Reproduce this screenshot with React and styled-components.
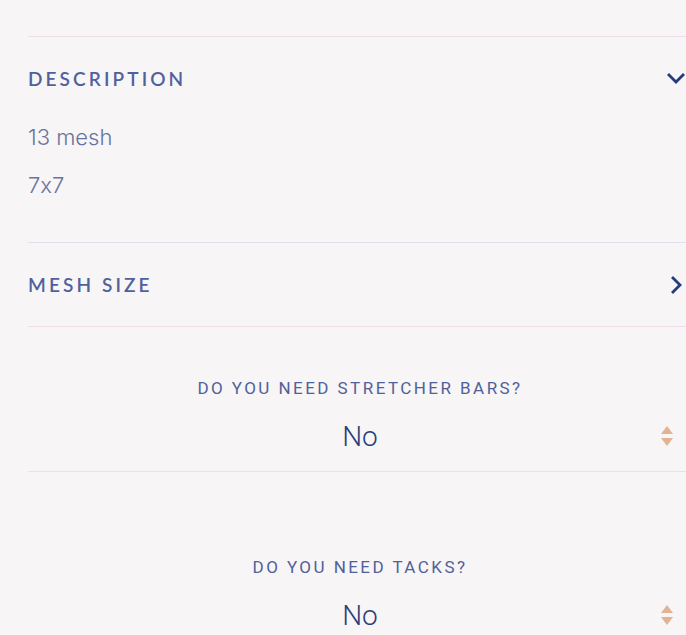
import React from "react";
import styled, { createGlobalStyle } from "styled-components";

const GlobalStyle = createGlobalStyle`
  html, body {
    margin: 0;
    padding: 0;
    background: #f7f5f6;
    overflow: hidden;
  }
  body {
    font-family: "Inter", "Liberation Sans", sans-serif;
  }
`;

const Page = styled.div`
  width: 664px;
  padding: 36px 0 0 28px;
`;

const Section = styled.div`
  border-top: 1px solid ${(p) => p.$line || "#eedfe8"};
`;

const Header = styled.div`
  display: flex;
  align-items: center;
  justify-content: space-between;
  height: ${(p) => p.$height}px;
  padding-right: 6px;
`;

const Title = styled.h3`
  margin: 0;
  font-family: "Lato", "Liberation Sans", sans-serif;
  font-weight: 600;
  font-size: 19px;
  letter-spacing: 3.1px;
  color: #4f619d;
`;

const Body = styled.div`
  display: flex;
  flex-direction: column;
  gap: 22px;
  padding: 5px 0 44px;
`;

const Line = styled.p`
  margin: 0;
  font-size: 22px;
  font-weight: 300;
  line-height: 26px;
  color: #67739f;
  font-feature-settings: "calt" 0;
`;

const Chevron = ({ dir }) => (
  <svg width="20" height="20" viewBox="0 0 20 20" fill="none">
    <path
      d={dir === "down" ? "M3 7 L10 14 L17 7" : "M7 3 L14 10 L7 17"}
      stroke="#263b7e"
      strokeWidth="2.8"
      strokeLinecap="square"
    />
  </svg>
);

const Field = styled.div`
  display: flex;
  flex-direction: column;
  align-items: center;
  padding-top: ${(p) => p.$top}px;
  border-bottom: ${(p) => (p.$divider ? "1px solid #eedfe8" : "none")};
`;

const Label = styled.label`
  font-family: "Roboto", "Liberation Sans", sans-serif;
  font-size: 17px;
  letter-spacing: 2.45px;
  color: #50609a;
  line-height: 22px;
`;

const SelectRow = styled.div`
  position: relative;
  align-self: stretch;
  display: flex;
  justify-content: center;
  align-items: center;
  height: 60px;
  margin-top: ${(p) => p.$top}px;
  margin-bottom: ${(p) => p.$bottom}px;
`;

const Value = styled.span`
  font-family: "Roboto", "Liberation Sans", sans-serif;
  font-size: 28px;
  font-weight: 300;
  color: #2e3d7a;
`;

const Arrows = styled.svg`
  position: absolute;
  right: 18px;
  top: 50%;
  transform: translateY(-50%);
`;

const SelectArrows = () => (
  <Arrows width="14" height="22" viewBox="0 0 14 22">
    <path d="M7 1 L13 9 L1 9 Z" fill="#e3b292" />
    <path d="M1 13 L13 13 L7 21 Z" fill="#e3b292" />
  </Arrows>
);

export default function App() {
  return (
    <>
      <GlobalStyle />
      <Page>
        <Section>
          <Header $height={82}>
            <Title>DESCRIPTION</Title>
            <Chevron dir="down" />
          </Header>
          <Body>
            <Line>13 mesh</Line>
            <Line>7x7</Line>
          </Body>
        </Section>
        <Section $line="#e1e1ea">
          <Header $height={83}>
            <Title>MESH SIZE</Title>
            <Chevron dir="right" />
          </Header>
        </Section>
        <Section>
          <Field $top={50} $divider>
            <Label>DO YOU NEED STRETCHER BARS?</Label>
            <SelectRow $top={7} $bottom={5}>
              <Value>No</Value>
              <SelectArrows />
            </SelectRow>
          </Field>
          <Field $top={84}>
            <Label>DO YOU NEED TACKS?</Label>
            <SelectRow $top={7} $bottom={0}>
              <Value>No</Value>
              <SelectArrows />
            </SelectRow>
          </Field>
        </Section>
      </Page>
    </>
  );
}
